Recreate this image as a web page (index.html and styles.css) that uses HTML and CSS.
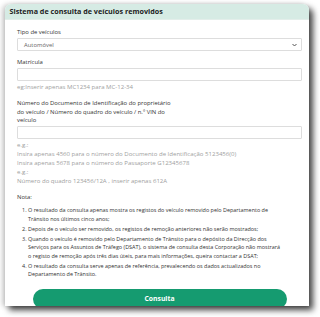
FILE: index.html
```html
<!DOCTYPE html>
<html lang="pt">
<head>
    <meta charset="UTF-8">
    <meta name="viewport" content="width=device-width, initial-scale=1.0">
    <title>Sistema de consulta de veículos removidos</title>
    <link rel="stylesheet" href="styles.css">
</head>
<body>
    <div class="card">
        <div class="card-header">Sistema de consulta de veículos removidos</div>
        <form class="card-body">
            <div class="field">
                <label class="label">Tipo de veículos</label>
                <div class="select">
                    <span>Automóvel</span>
                    <svg class="chevron" width="5" height="4" viewBox="0 0 5 4"><path d="M0.5 1 L2.5 3 L4.5 1" fill="none" stroke="#555" stroke-width="1"/></svg>
                </div>
            </div>
            <div class="field">
                <label class="label">Matrícula</label>
                <div class="input"></div>
                <p class="hint">eg:Inserir apenas MC1234 para MC-12-34</p>
            </div>
            <div class="field">
                <label class="label">Número do Documento de Identificação do proprietário<br>do veículo / Número do quadro do veículo / n.º VIN do<br>veículo</label>
                <div class="input"></div>
                <p class="hint">e.g.:</p>
                <p class="hint">Insira apenas 4560 para o número do Documento de Identificação 5123456(0)</p>
                <p class="hint">Insira apenas 5678 para o número do Passaporte G12345678</p>
                <p class="hint">e.g.:</p>
                <p class="hint">Número do quadro 123456/12A , inserir apenas 612A</p>
            </div>
            <div class="note">
                <p class="note-title">Nota:</p>
                <ol class="note-list">
                    <li>O resultado da consulta apenas mostra os registos do veículo removido pelo Departamento de<br>Trânsito nos últimos cinco anos;</li>
                    <li>Depois de o veículo ser removido, os registos de remoção anteriores não serão mostrados;</li>
                    <li>Quando o veículo é removido pelo Departamento de Trânsito para o depósito da Direcção dos<br>Serviços para os Assuntos de Tráfego (DSAT), o sistema de consulta desta Corporação não mostrará<br>o registo de remoção após três dias úteis, para mais informações, queira contactar a DSAT;</li>
                    <li>O resultado da consulta serve apenas de referência, prevalecendo os dados actualizados no<br>Departamento de Trânsito.</li>
                </ol>
            </div>
            <button type="button" class="submit">Consulta</button>
        </form>
    </div>
</body>
</html>
```

FILE: styles.css
```css
html, body {
    margin: 0;
    height: 100%;
}

body {
    font-family: 'Open Sans', sans-serif;
    font-size: 5.9px;
    color: #333;
    background: #fff;
    overflow: hidden;
}

.card {
    position: relative;
    margin: 4px 0 0 5px;
    width: 304px;
    height: 302px;
    background: #fff;
    border-radius: 6px 6px 0 0;
    box-shadow: 4px 4px 6px rgba(0, 0, 0, 0.75), -3px 0 5px rgba(0, 0, 0, 0.18);
    overflow: hidden;
}

.card-header {
    height: 15px;
    line-height: 15px;
    padding-left: 4.5px;
    background: #d6ebe4;
    border-bottom: 1px solid #e3eeea;
    font-size: 7.2px;
    font-weight: 700;
    color: #222;
}

.card-body {
    padding: 8px 7px 0 12px;
}

.field {
    margin-bottom: 7px;
}

.label {
    display: block;
    line-height: 8.5px;
    margin-bottom: 1.5px;
}

.select,
.input {
    box-sizing: border-box;
    height: 13px;
    border: 1px solid #ddd;
    border-radius: 1px;
    background: #fff;
}

.select {
    display: flex;
    align-items: center;
    justify-content: space-between;
    padding: 0 4px 0 6px;
    color: #666;
}

.hint {
    margin: 0;
    font-size: 6.05px;
    line-height: 9px;
    color: #a0a0a0;
}

.input + .hint {
    margin-top: 2px;
}

.note {
    margin-top: 4px;
}

.note-title {
    margin: 0 0 4px;
    line-height: 9px;
}

.note-list {
    margin: 0;
    padding: 0 0 0 11px;
    font-size: 5.45px;
    line-height: 8.5px;
    white-space: nowrap;
}

.note-list li {
    margin-bottom: 1.5px;
}

.submit {
    display: block;
    width: 254px;
    height: 20px;
    margin: 10px auto 0;
    border: none;
    border-radius: 10px;
    background: #159b70;
    color: #fff;
    font-family: 'Open Sans', sans-serif;
    font-size: 6.8px;
    font-weight: 700;
}
```
